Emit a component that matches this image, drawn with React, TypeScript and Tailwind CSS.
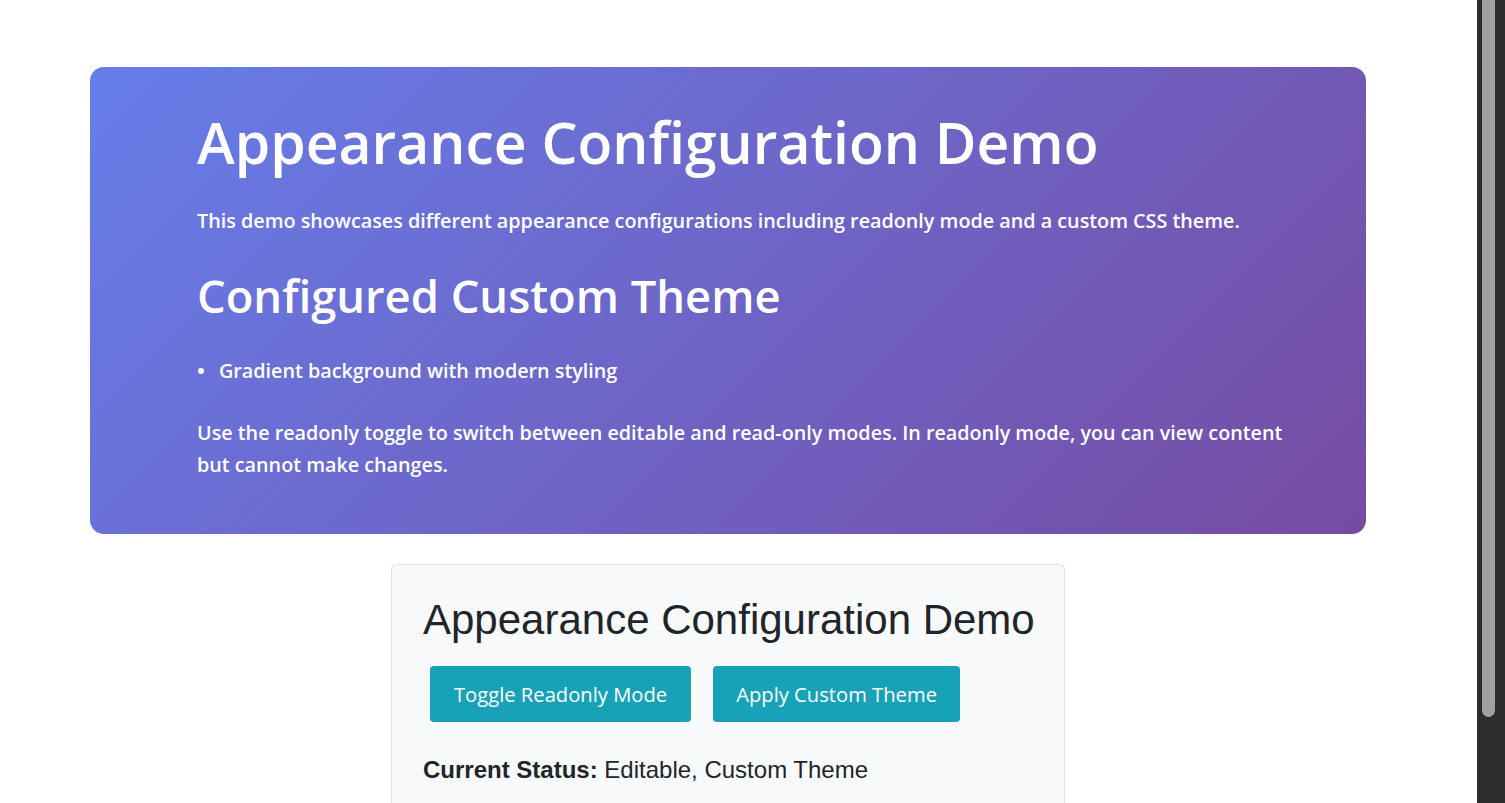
import { useState } from "react";

const App = () => {
  const [readonly, setReadonly] = useState(false);
  const [customTheme, setCustomTheme] = useState(true);

  return (
    <div className="flex h-[803px] w-[1505px] overflow-hidden bg-white">
      {/* main page */}
      <div className="flex flex-1 flex-col pl-[90px] pr-[111px] pt-[67px]">
        {/* gradient hero */}
        <div className="rounded-[14px] bg-[linear-gradient(135deg,#667eea_0%,#764ba2_100%)] pl-[107px] pr-[60px] pt-[40px] pb-[53px] font-['Open_Sans',sans-serif] font-semibold text-white">
          <h1 className="text-[57px] leading-[70px]">
            Appearance Configuration Demo
          </h1>
          <p className="mt-[30px] text-[19.75px] leading-[28px]">
            This demo showcases different appearance configurations including
            readonly mode and a custom CSS theme.
          </p>
          <h2 className="mt-[33px] text-[45.3px] leading-[56px]">
            Configured Custom Theme
          </h2>
          <ul className="mt-[33px]">
            <li className="flex items-center text-[19.75px] leading-[28px]">
              <span className="ml-[1px] mr-[15px] h-[6px] w-[6px] rounded-full bg-white" />
              Gradient background with modern styling
            </li>
          </ul>
          <p className="mt-[32px] text-[19.75px] leading-[32px]">
            Use the readonly toggle to switch between editable and read-only
            modes. In readonly mode, you can view content but cannot make
            changes.
          </p>
        </div>

        {/* demo panel */}
        <div className="mx-auto mt-[30px] w-[674px] flex-1 rounded-t-[6px] border border-b-0 border-[#dee2e6] bg-[#f8f9fa] px-[31px] pt-[30px] text-[#212529]">
          <h3 className="whitespace-nowrap font-['Liberation_Sans',Arial,sans-serif] text-[42px] leading-[50px]">
            Appearance Configuration Demo
          </h3>
          <div className="mt-[21px] ml-[7px] flex gap-[22px]">
            <button
              onClick={() => setReadonly(!readonly)}
              className="h-[56px] rounded-[4px] bg-[#17a2b8] px-[24px] font-['Open_Sans',sans-serif] text-[20.2px] text-white"
            >
              Toggle Readonly Mode
            </button>
            <button
              onClick={() => setCustomTheme(!customTheme)}
              className="h-[56px] rounded-[4px] bg-[#17a2b8] px-[23px] font-['Open_Sans',sans-serif] text-[20.2px] text-white"
            >
              Apply Custom Theme
            </button>
          </div>
          <p className="mt-[34px] font-['Liberation_Sans',Arial,sans-serif] text-[24px] leading-[28px]">
            <strong className="font-bold">Current Status:</strong>{" "}
            {readonly ? "Readonly" : "Editable"},{" "}
            {customTheme ? "Custom Theme" : "Default Theme"}
          </p>
        </div>
      </div>

      {/* scrollbar */}
      <div className="w-[28px] bg-[#2c2c2c] pl-[5px] pr-[10px]">
        <div className="h-[717px] rounded-b-[7px] bg-[#a0a0a0]" />
      </div>
    </div>
  );
};

export default App;
